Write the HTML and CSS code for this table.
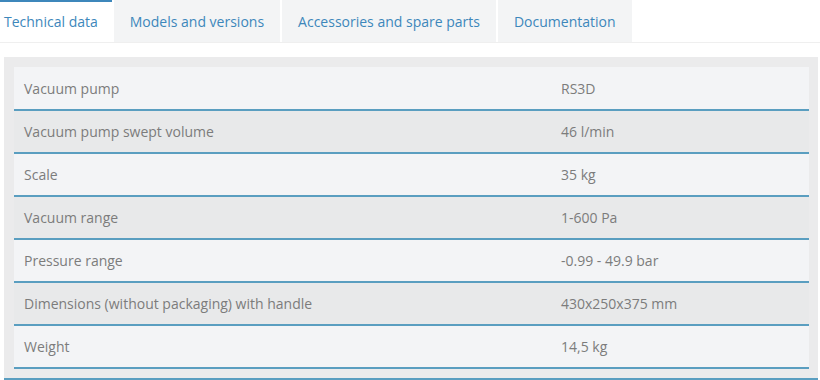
FILE: index.html
```html
<!DOCTYPE html>
<html lang="en">
  <head>
    <meta charset="UTF-8" />
    <meta name="viewport" content="width=device-width, initial-scale=1.0" />
    <title>Product details</title>
    <link rel="stylesheet" href="styles.css">
  </head>
  <body>
    <div class="product-tabs">
      <ul class="tab-nav">
        <li class="tab active"><a href="#technical">Technical data</a></li>
        <li class="tab"><a href="#models">Models and versions</a></li>
        <li class="tab"><a href="#accessories">Accessories and spare parts</a></li>
        <li class="tab"><a href="#docs">Documentation</a></li>
      </ul>

      <section id="technical" class="tab-panel">
        <div class="spec-box">
          <table class="spec-table">
            <tr><td>Vacuum pump</td><td>RS3D</td></tr>
            <tr><td>Vacuum pump swept volume</td><td>46 l/min</td></tr>
            <tr><td>Scale</td><td>35 kg</td></tr>
            <tr><td>Vacuum range</td><td>1-600 Pa</td></tr>
            <tr><td>Pressure range</td><td>-0.99 - 49.9 bar</td></tr>
            <tr><td>Dimensions (without packaging) with handle</td><td>430x250x375 mm</td></tr>
            <tr><td>Weight</td><td>14,5 kg</td></tr>
          </table>
        </div>
      </section>
    </div>
  </body>
</html>
```

FILE: styles.css
```css
* {
  margin: 0;
  padding: 0;
  box-sizing: border-box;
}

:root {
  --link: #3d87bb;
  --text: #7c7c7c;
  --tab-bg: #f3f4f5;
  --row-light: #f3f4f6;
  --row-dark: #e8e9ea;
  --rule: #5a9ec0;
}

body {
  background: #fff;
  font-family: "Open Sans", "Liberation Sans", sans-serif;
  font-size: 14px;
  color: var(--text);
}

/* Tabs */
.tab-nav {
  list-style: none;
  display: flex;
  gap: 2px;
  height: 43px;
  border-bottom: 1px solid #efefef;
}

.tab a {
  display: flex;
  align-items: center;
  height: 42px;
  padding: 0 16px;
  background: var(--tab-bg);
  color: var(--link);
  text-decoration: none;
  font-size: 14px;
}

.tab.active a {
  background: #fff;
  border-top: 2px solid var(--link);
  padding: 0 14px 2px 4px;
}

/* Specification table */
.tab-panel {
  padding: 14px 2px 0 4px;
}

.spec-box {
  background: #ebebec;
  padding: 10px 9px 9px 10px;
  border-bottom: 2px solid var(--rule);
}

.spec-table {
  width: 100%;
  border-collapse: collapse;
}

.spec-table tr {
  height: 43px;
  background: var(--row-light);
  border-bottom: 2px solid var(--rule);
}

.spec-table tr:nth-child(even) {
  background: var(--row-dark);
}

.spec-table td {
  padding: 0 10px;
  vertical-align: middle;
}

.spec-table td:first-child {
  width: 537px;
}
```
